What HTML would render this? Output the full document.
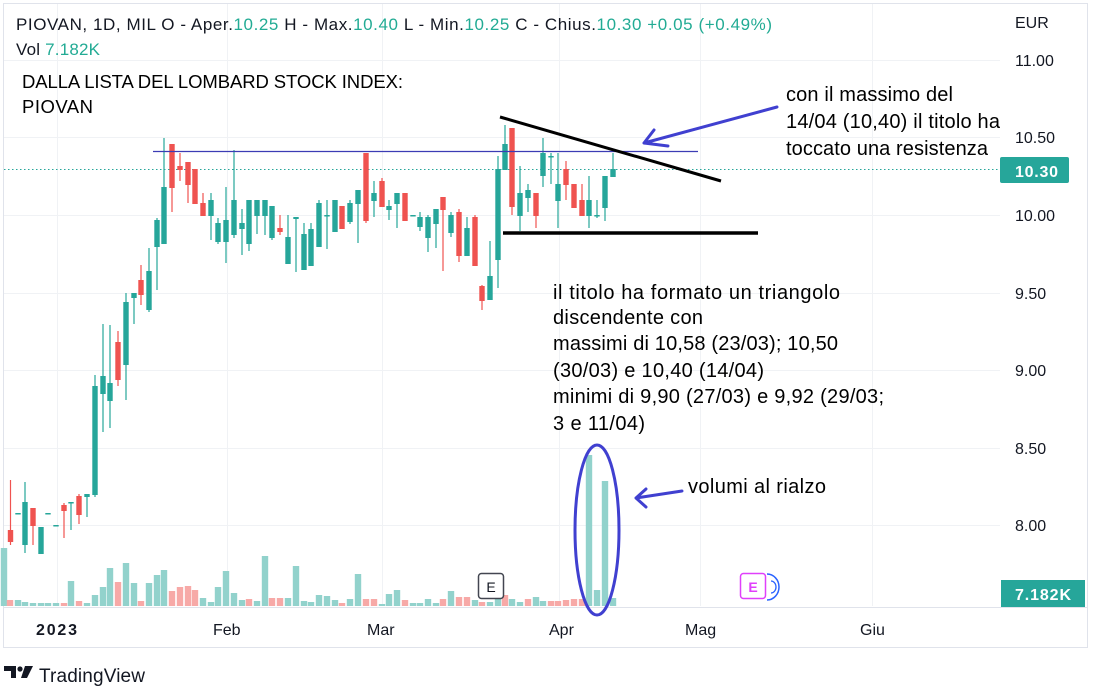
<!DOCTYPE html>
<html><head><meta charset="utf-8">
<style>
body{margin:0;width:1113px;height:700px;background:#fff;overflow:hidden;font-family:"Liberation Sans",sans-serif;}
svg{position:absolute;left:0;top:0}
</style></head>
<body>
<svg id="s" width="1113" height="700" xmlns="http://www.w3.org/2000/svg">
<rect x="3.5" y="3.5" width="1084" height="644" fill="#fff" stroke="#e0e3eb"/>
<g stroke="#f0f2f5" stroke-width="1">
<line x1="4" y1="60.5" x2="1000" y2="60.5"/><line x1="4" y1="137.5" x2="1000" y2="137.5"/>
<line x1="4" y1="215.5" x2="1000" y2="215.5"/><line x1="4" y1="293.5" x2="1000" y2="293.5"/>
<line x1="4" y1="370.5" x2="1000" y2="370.5"/><line x1="4" y1="448.5" x2="1000" y2="448.5"/>
<line x1="4" y1="525.5" x2="1000" y2="525.5"/>
<line x1="57.5" y1="4" x2="57.5" y2="606"/><line x1="227.5" y1="4" x2="227.5" y2="606"/>
<line x1="382.5" y1="4" x2="382.5" y2="606"/><line x1="559.5" y1="4" x2="559.5" y2="606"/>
<line x1="700.5" y1="4" x2="700.5" y2="606"/><line x1="872.5" y1="4" x2="872.5" y2="606"/>
</g>
<line x1="4" y1="607.5" x2="1087" y2="607.5" stroke="#e0e3eb"/>
<line x1="4" y1="169.5" x2="1000" y2="169.5" stroke="#26a69a" stroke-dasharray="1.5 2.5"/>
<g id="vol"></g>
<g id="cdl"></g>
<line x1="153" y1="151.5" x2="698" y2="151.5" stroke="#3c3cb4" stroke-width="1.2"/>
<line x1="500" y1="117" x2="721" y2="181" stroke="#000" stroke-width="3"/>
<line x1="503" y1="233" x2="758" y2="233" stroke="#000" stroke-width="3.5"/>
<g stroke="#4040d0" stroke-width="3" fill="none" stroke-linecap="round">
<path d="M777 107 L644 143 M644 143 L654 130 M644 143 L668 146"/>
<path d="M682 491 L636 498 M636 498 L646 489 M636 498 L646 507"/>
<ellipse cx="597" cy="530" rx="22" ry="85"/>
</g>
<rect x="478.5" y="573.5" width="25" height="25" rx="3" fill="#fff" stroke="#434651" stroke-width="1.5"/>
<text x="491" y="592" font-size="14" text-anchor="middle" fill="#131722" font-family="Liberation Sans">E</text>
<rect x="740.5" y="573.5" width="25" height="25" rx="3" fill="#fff" stroke="#e040fb" stroke-width="1.5"/>
<text x="753" y="592" font-size="14" text-anchor="middle" fill="#e040fb" font-weight="bold" font-family="Liberation Sans">E</text>
<path d="M767 574 A12 13 0 0 1 767 600" stroke="#2962ff" stroke-width="1.5" fill="none"/>
<path d="M771 581 A5 6 0 0 1 771 593" stroke="#2962ff" stroke-width="1.3" fill="none"/>
<g font-family="Liberation Sans" font-size="16" fill="#131722">
<text x="1015" y="28">EUR</text>
<text x="1015" y="66">11.00</text><text x="1015" y="143">10.50</text><text x="1015" y="221">10.00</text>
<text x="1015" y="299">9.50</text><text x="1015" y="376">9.00</text><text x="1015" y="454">8.50</text><text x="1015" y="531">8.00</text>
<text x="36" y="635" font-weight="bold" textLength="41">2023</text><text x="213" y="635">Feb</text><text x="367" y="635">Mar</text>
<text x="549" y="635">Apr</text><text x="685" y="635">Mag</text><text x="860" y="635">Giu</text>
</g>
<rect x="1000" y="157" width="69" height="26" rx="2" fill="#26a69a"/>
<text x="1015" y="177" font-size="16" fill="#fff" font-weight="bold" font-family="Liberation Sans" textLength="43">10.30</text>
<rect x="1001" y="580" width="84" height="27" fill="#26a69a"/>
<text x="1015" y="600" font-size="16" fill="#fff" font-weight="bold" font-family="Liberation Sans" textLength="56">7.182K</text>
<g font-family="Liberation Sans" font-size="17" fill="#131722">
<text x="16" y="30" textLength="756">PIOVAN, 1D, MIL  O - Aper.<tspan fill="#22ab94">10.25</tspan>  H - Max.<tspan fill="#22ab94">10.40</tspan>  L - Min.<tspan fill="#22ab94">10.25</tspan>  C - Chius.<tspan fill="#22ab94">10.30</tspan>  <tspan fill="#22ab94">+0.05 (+0.49%)</tspan></text>
<text x="16" y="55" textLength="84">Vol  <tspan fill="#22ab94">7.182K</tspan></text>
</g>
<g font-family="Liberation Sans" font-size="18.5" fill="#000">
<text x="22" y="88" textLength="381">DALLA LISTA DEL LOMBARD STOCK INDEX:</text>
<text x="22" y="113" textLength="71">PIOVAN</text>
</g>
<g font-family="Liberation Sans" font-size="20" fill="#000">
<text x="786" y="101" textLength="167">con il massimo del</text>
<text x="786" y="128" textLength="214">14/04 (10,40) il titolo ha</text>
<text x="786" y="155" textLength="202">toccato una resistenza</text>
<text x="553" y="299" textLength="287">il titolo ha formato un triangolo</text>
<text x="553" y="324" textLength="150">discendente con</text>
<text x="553" y="350" textLength="285">massimi di 10,58 (23/03); 10,50</text>
<text x="553" y="377" textLength="211">(30/03) e 10,40 (14/04)</text>
<text x="553" y="403" textLength="331">minimi di 9,90 (27/03) e 9,92 (29/03;</text>
<text x="553" y="430" textLength="92">3 e 11/04)</text>
<text x="688" y="493" textLength="138">volumi al rialzo</text>
</g>
<g fill="#131722">
<path d="M4 666 H16 V678 H11 V671 H4 Z"/>
<circle cx="20" cy="669" r="2.6"/>
<path d="M25 666 H33 L27 678 H21 Z"/>
</g>
<text x="39" y="682" font-size="19" fill="#131722" font-family="Liberation Sans" textLength="106">TradingView</text>
</svg>
<script>
var G="#26a69a",R="#ef5350";
var c=[[10.5,530,542,480,545],[18,513,513,513,513],[25,545,502,482,553],[33,508,526,508,545],[41,554,527,527,554],[48,513,513,513,513],[56,525,525,525,525],[64,505,511,503,538],[71,503,502,502,530],[79,496,515,494,524],[87,497,494,494,517],[95,495,386,375,497],[103,394,376,324,432],[110,401,383,325,428],[118,342,380,331,386],[126,365,302,293,400],[134,298,293,293,324],[141,280,295,265,305],[149,310,271,248,312],[157,247,220,218,290],[164,244,187,138,244],[172,144,188,144,212],[180,166,170,153,181],[188,162,185,162,203],[195,169,204,169,204],[203,203,216,193,216],[211,216,200,193,240],[218,242,223,218,244],[226,242,220,187,263],[234,235,200,150,238],[242,229,223,209,255],[249,244,200,200,251],[257,216,200,200,234],[265,216,200,200,235],[272,238,206,206,240],[280,228,232,215,235],[288,264,237,215,264],[296,219,217,217,272],[304,270,234,223,270],[311,266,229,223,266],[319,247,203,200,247],[327,215,215,200,249],[335,232,200,200,232],[342,206,229,206,229],[350,222,203,200,224],[358,204,190,190,243],[366,153,221,153,223],[374,201,193,181,217],[382,181,207,178,207],[389,210,206,200,220],[397,204,193,193,228],[405,193,221,193,221],[413,215,215,215,215],[420,227,217,212,231],[428,238,217,215,252],[436,224,209,209,248],[443,197,210,197,271],[451,233,215,212,237],[459,212,256,209,262],[467,256,228,217,256],[475,217,266,215,266],[482,286,301,285,310],[490,300,276,241,300],[498,260,169,156,288],[505,170,144,125,170],[512,128,207,128,215],[520,216,193,166,231],[528,198,190,184,212],[536,193,216,193,228],[543,176,153,138,187],[551,156,156,153,184],[558,201,184,153,228],[566,169,185,161,200],[574,184,208,184,208],[582,200,216,184,216],[589,216,200,176,228],[597,215,215,200,218],[605,208,176,176,221],[613,177,169,153,177]];
var h="";
c.forEach(function(d){var x=d[0],o=d[1],cl=d[2],col=cl<=o?G:R;var t=Math.min(o,cl),b=Math.max(o,cl);if(b-t<1.5){b=t+1.5}
h+='<line x1="'+x+'" y1="'+d[3]+'" x2="'+x+'" y2="'+d[4]+'" stroke="'+col+'" stroke-width="1.2"/>';
h+='<rect x="'+(x-2.7)+'" y="'+t+'" width="5.4" height="'+(b-t)+'" fill="'+col+'"/>';});
document.getElementById("cdl").innerHTML=h;
var VG="#92d2cc",VR="#f7a9a7";
var v=[[4,58,VG],[10,6,VR],[18,6,VG],[25,4,VG],[33,3,VG],[41,3,VG],[48,3,VG],[56,3,VG],[64,3,VR],[71,25,VG],[79,5,VR],[87,3,VG],[95,11,VG],[103,19,VG],[110,38,VG],[118,24,VR],[126,43,VG],[134,23,VG],[141,5,VR],[149,23,VG],[157,31,VG],[164,36,VG],[172,15,VR],[180,19,VR],[188,20,VR],[195,16,VR],[203,8,VG],[211,4,VG],[218,19,VG],[226,35,VG],[234,13,VG],[242,6,VG],[249,7,VR],[257,5,VG],[265,50,VG],[272,8,VR],[280,8,VR],[288,8,VG],[296,40,VG],[304,5,VG],[311,4,VG],[319,11,VG],[327,10,VG],[335,6,VG],[342,3,VR],[350,7,VG],[358,32,VG],[366,7,VR],[374,7,VR],[382,2,VG],[389,12,VG],[397,16,VG],[405,6,VR],[413,3,VG],[420,3,VG],[428,7,VG],[436,3,VG],[443,7,VR],[451,15,VG],[459,9,VR],[467,9,VR],[475,6,VG],[482,4,VR],[490,4,VG],[498,15,VG],[505,11,VR],[512,7,VG],[520,4,VG],[528,7,VR],[536,9,VG],[543,5,VG],[551,5,VR],[558,5,VR],[566,6,VR],[574,7,VR],[582,7,VR],[589,151,VG],[597,16,VG],[605,125,VG],[613,8,VG]];
var vh="";v.forEach(function(d){vh+='<rect x="'+(d[0]-3.2)+'" y="'+(606-d[1])+'" width="6.4" height="'+d[1]+'" fill="'+d[2]+'"/>';});
document.getElementById("vol").innerHTML=vh;
</script>
</body></html>
